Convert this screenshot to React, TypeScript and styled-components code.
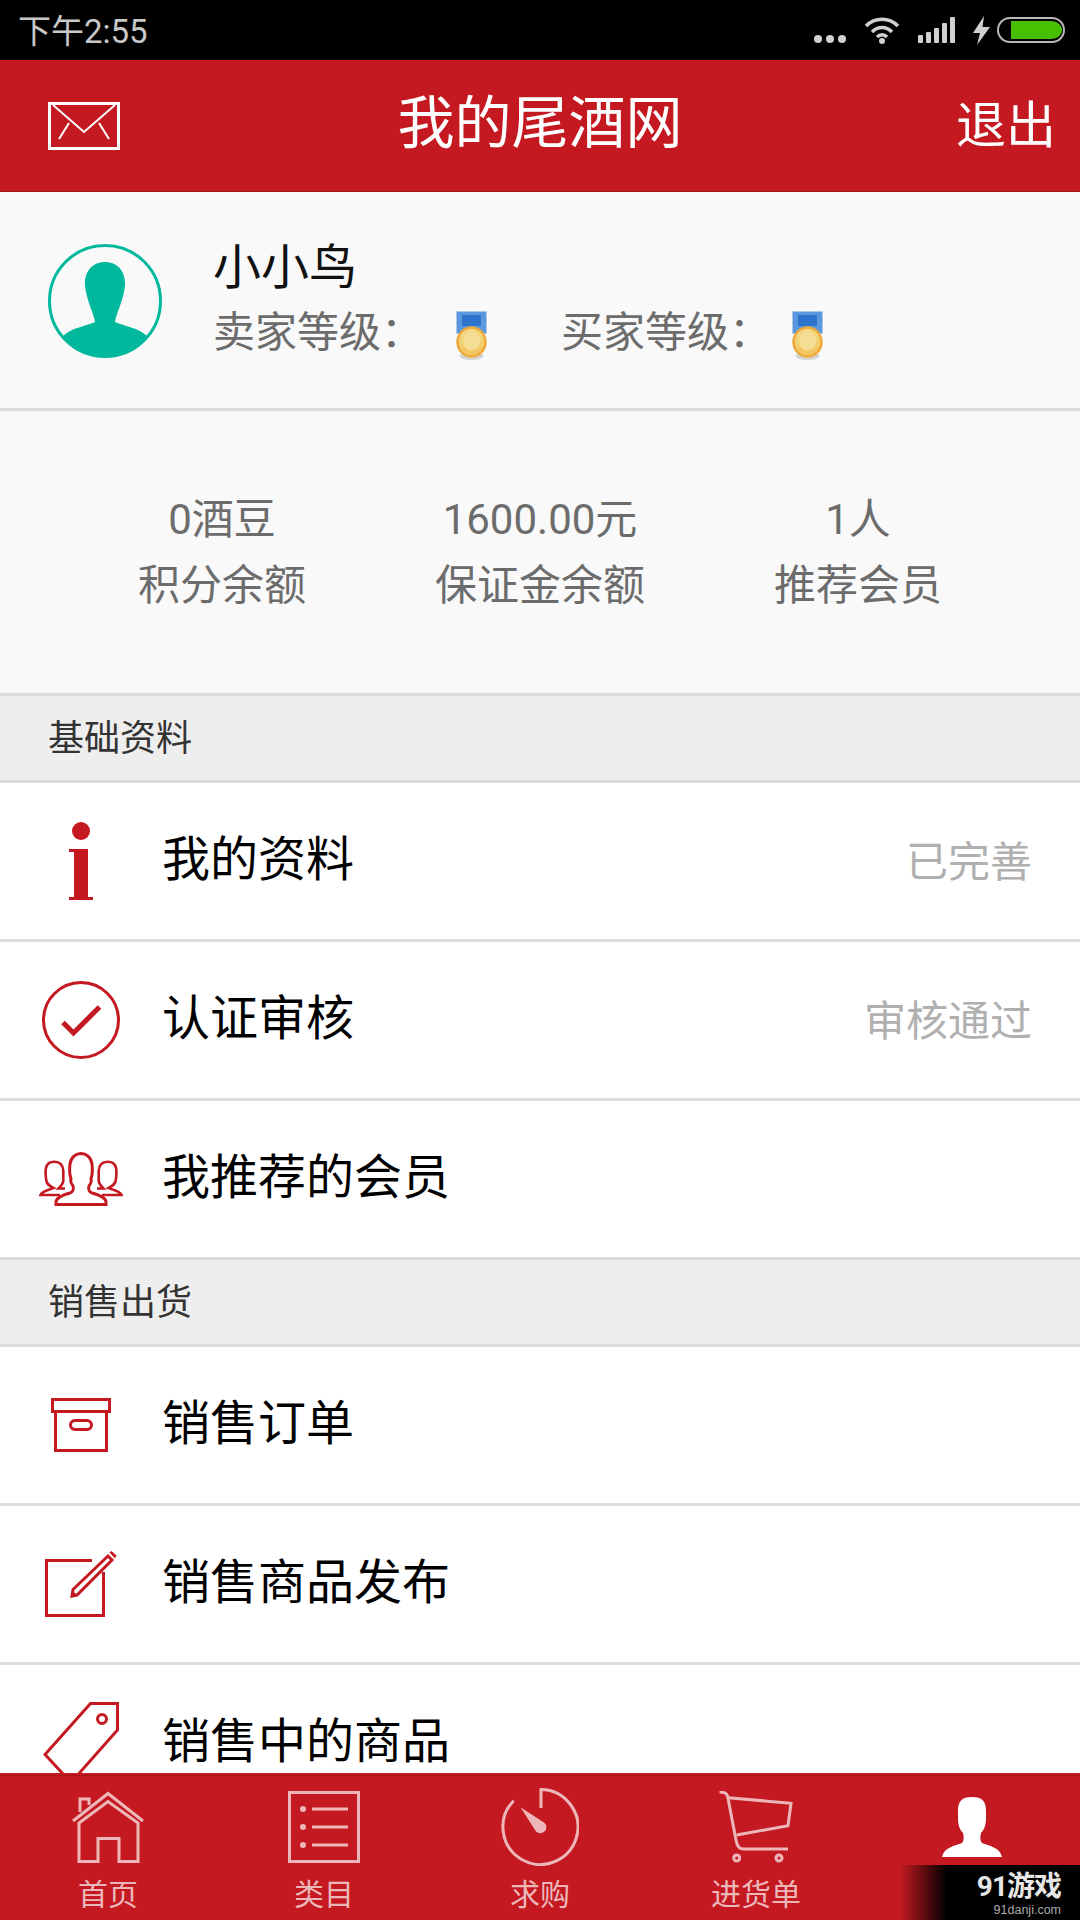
import styled, { createGlobalStyle } from 'styled-components';
import type { ReactNode } from 'react';

const RED = '#c41920';
const PINK = '#edb7ba';
const LINE = '#dcdcdc';

const GlobalStyle = createGlobalStyle`
  html, body {
    margin: 0;
    padding: 0;
    background: #fff;
  }
  body {
    font-family: Roboto, "Noto Sans CJK SC", sans-serif;
  }
`;

const Page = styled.div`
  position: relative;
  width: 1080px;
  height: 1920px;
  display: flex;
  flex-direction: column;
  overflow: hidden;
`;

const StatusBar = styled.div`
  height: 60px;
  flex: none;
  background: #000;
  display: flex;
  align-items: center;
  padding: 0 15px 0 18px;
  color: #c8c8c8;
`;

const Clock = styled.span`
  font-size: 33px;
  flex: 1;
  margin-top: -2px;
`;

const StatusIcons = styled.div`
  display: flex;
  align-items: center;
  gap: 18px;
`;

const Header = styled.header`
  height: 131px;
  flex: none;
  background: ${RED};
  border-bottom: 1px solid #a5141a;
  display: grid;
  grid-template-columns: 1fr auto 1fr;
  align-items: center;
  padding: 0 24px;
  color: #fff;
`;

const MailIcon = styled.svg`
  margin-left: 24px;
`;

const Title = styled.h1`
  margin: 0 0 4px;
  font-size: 57px;
  font-weight: 400;
  line-height: 1;
`;

const Logout = styled.span`
  justify-self: end;
  font-size: 50px;
  line-height: 1;
  margin-bottom: 0;
`;

const Scroller = styled.main`
  flex: 1;
  min-height: 0;
  overflow: hidden;
`;

const Profile = styled.section`
  height: 219px;
  box-sizing: border-box;
  padding: 48px 0 0 48px;
  display: flex;
  align-items: flex-start;
  gap: 51px;
  background: #f9f9f9;
  border-bottom: 3px solid ${LINE};
`;

const ProfileAvatar = styled.svg`
  flex: none;
  margin-top: 4px;
`;

const ProfileText = styled.div`
  display: flex;
  flex-direction: column;
`;

const Name = styled.div`
  font-size: 48px;
  line-height: 56px;
  color: #111;
`;

const Levels = styled.div`
  display: flex;
  align-items: flex-start;
  margin-top: 12px;
`;

const LevelLabel = styled.span<{ $width: number }>`
  font-size: 42px;
  line-height: 50px;
  color: #6c6c6c;
  width: ${(p) => p.$width}px;
`;

const Medal = styled.svg`
  flex: none;
  margin: 3px 74px 0 0;
`;

const Stats = styled.section`
  height: 285px;
  box-sizing: border-box;
  padding-top: 2px;
  display: grid;
  grid-template-columns: repeat(3, 318px);
  justify-content: center;
  align-content: center;
  background: #f9f9f9;
  border-bottom: 3px solid ${LINE};
`;

const Stat = styled.div`
  text-align: center;
  font-size: 42px;
  line-height: 66px;
  color: #6c6c6c;
`;

const SectionTitle = styled.div`
  height: 87px;
  box-sizing: border-box;
  padding: 0 0 7px 48px;
  display: flex;
  align-items: center;
  background: #eee;
  border-bottom: 3px solid ${LINE};
  font-size: 36px;
  color: #333;
`;

const Row = styled.div`
  height: 159px;
  box-sizing: border-box;
  display: flex;
  align-items: center;
  background: #fff;
  border-bottom: 3px solid ${LINE};
  padding-right: 48px;
`;

const RowIcon = styled.div`
  width: 162px;
  flex: none;
  display: flex;
  justify-content: center;
`;

const RowLabel = styled.span`
  flex: 1;
  font-size: 48px;
  line-height: 1;
  color: #000;
  margin-bottom: 2px;
`;

const RowValue = styled.span`
  font-size: 42px;
  line-height: 1;
  color: #b0b0b0;
  margin-top: 3px;
`;

const TabBar = styled.nav`
  height: 147px;
  flex: none;
  display: grid;
  grid-template-columns: repeat(5, 216px);
  background: linear-gradient(${RED} 2px, #a5141a 2px, #a5141a 3px, ${RED} 3px);
`;

const Tab = styled.div`
  display: flex;
  flex-direction: column;
  align-items: center;
  padding-top: 15px;
  color: ${PINK};
`;

const TabIcon = styled.div`
  height: 78px;
  display: flex;
  align-items: center;
  justify-content: center;
`;

const TabLabel = styled.span`
  font-size: 30px;
  line-height: 1;
  margin-top: 14px;
`;

const Watermark = styled.div`
  position: absolute;
  right: 0;
  bottom: 0;
  width: 180px;
  height: 55px;
  box-sizing: border-box;
  padding: 7px 19px 0 0;
  background: linear-gradient(90deg, rgba(0, 0, 0, 0), #000 26%);
  display: flex;
  flex-direction: column;
  align-items: flex-end;
  color: #e6e6e6;
`;

const WatermarkLogo = styled.span`
  font-size: 28px;
  font-weight: 700;
  line-height: 30px;
  letter-spacing: -1px;
`;

const WatermarkUrl = styled.span`
  font-family: "Liberation Sans", sans-serif;
  font-size: 12.5px;
  line-height: 16px;
  color: #aaa;
`;

const stroke = { fill: 'none', stroke: RED, strokeWidth: 3 };
const tabStroke = { fill: 'none', stroke: PINK, strokeWidth: 3 };

const rowIcons: Record<string, ReactNode> = {
  info: (
    <svg width="24" height="78" viewBox="0 0 24 78" fill={RED}>
      <circle cx="12" cy="9" r="9" />
      <path d="M0 27h19v48h5v3H0v-3h5V30H0z" />
    </svg>
  ),
  check: (
    <svg width="78" height="78" viewBox="0 0 78 78">
      <circle cx="39" cy="39" r="37.5" {...stroke} />
      <path d="M21 41.5L31.5 52 57.5 26" fill="none" stroke={RED} strokeWidth="5" />
    </svg>
  ),
  group: (
    <svg width="84" height="54" viewBox="0 0 84 54">
      <path
        {...stroke}
        d="M17 52.5H67V50C67 46 60 43 53 41C50 40 49 37 50 34C52 31 53 29 52 27C53 24 54 20 53 12C52 5 47 1.5 42 1.5C37 1.500 32 5 31 12C30 20 31 24 32 27C31 29 32 31 34 34C35 37 34 40 31 41C24 43 17 46 17 50Z"
      />
      <path
        {...stroke}
        strokeWidth="2.600"
        d="M21 43H1.500C3 39 9 38 14.500 36C11 34 7.700 33 7.200 28C6.500 22 6 19 7 16C8 11 11 9.700 15.300 9.700C20 9.700 24 12 24.300 19V29C24 32 21 35 19.500 36.500H26"
      />
      <path
        {...stroke}
        strokeWidth="2.600"
        d="M63 43H82.500C81 39 75 38 69.500 36C73 34 76.300 33 76.800 28C77.500 22 78 19 77 16C76 11 73 9.700 68.700 9.700C64 9.700 60 12 59.700 19V29C60 32 63 35 64.500 36.500H58"
      />
    </svg>
  ),
  box: (
    <svg width="60" height="54" viewBox="0 0 60 54">
      <path {...stroke} d="M1.500 1.500h57v12h-57zM4.500 13.500v39h51v-39" />
      <rect {...stroke} x="19.500" y="22.500" width="21" height="9" rx="4.500" />
    </svg>
  ),
  edit: (
    <svg width="72" height="66" viewBox="0 0 72 66">
      <path {...stroke} d="M47 9.500H1.500v55h57V21" />
      <path {...stroke} d="M28 38.500L63 5l4 4-35 35-5 1z" />
      <path fill={RED} d="M64.500 1.500l2-1.500 5 4.500-1.500 3zM27 39l5 5-5.500 1.500z" />
    </svg>
  ),
  tag: (
    <svg width="76" height="82" viewBox="0 0 76 82">
      <path {...stroke} d="M47.500 1.500H74.500V28L28 80.500L2 52.500z" />
      <circle {...stroke} cx="59" cy="17" r="4.500" />
    </svg>
  ),
};

const menuSections = [
  {
    title: '基础资料',
    rows: [
      { icon: 'info', label: '我的资料', value: '已完善' },
      { icon: 'check', label: '认证审核', value: '审核通过' },
      { icon: 'group', label: '我推荐的会员' },
    ],
  },
  {
    title: '销售出货',
    rows: [
      { icon: 'box', label: '销售订单' },
      { icon: 'edit', label: '销售商品发布' },
      { icon: 'tag', label: '销售中的商品' },
    ],
  },
];

const stats = [
  { value: '0酒豆', label: '积分余额' },
  { value: '1600.00元', label: '保证金余额' },
  { value: '1人', label: '推荐会员' },
];

const tabs: { label?: string; icon: ReactNode }[] = [
  {
    label: '首页',
    icon: (
      <svg width="72" height="72" viewBox="0 0 72 72">
        <path {...tabStroke} d="M7 31V70.500H26V47.500H47V70.500H66V31M1 30L36 2.500L71 30M7 32L36 10.500L66 32M8 21V8H17V14" />
      </svg>
    ),
  },
  {
    label: '类目',
    icon: (
      <svg width="72" height="72" viewBox="0 0 72 72">
        <rect {...tabStroke} x="1.500" y="1.500" width="69" height="69" />
        <path {...tabStroke} d="M24 18H60M24 36H60M24 54H60" />
        <g fill={PINK}>
          <circle cx="15" cy="18" r="3" />
          <circle cx="15" cy="36" r="3" />
          <circle cx="15" cy="54" r="3" />
        </g>
      </svg>
    ),
  },
  {
    label: '求购',
    icon: (
      <svg width="78" height="78" viewBox="0 0 78 78">
        <path {...tabStroke} d="M40 20V1.500A37.500 37.500 0 1 1 12.700 12.700" />
        <path fill={PINK} d="M19.500 19.300L43 34.500A6 6 0 1 1 34 42z" />
      </svg>
    ),
  },
  {
    label: '进货单',
    icon: (
      <svg width="74" height="72" viewBox="0 0 74 72">
        <path {...tabStroke} d="M0.500 1C5 1 8 2 8.700 5.600L17 49C18 55 20 58 24 58H69" />
        <path {...tabStroke} d="M9.600 6.700L72 12.300L69 34.700L17.700 44" />
        <circle {...tabStroke} cx="17.700" cy="67" r="3" />
        <circle {...tabStroke} cx="60" cy="67" r="3" />
      </svg>
    ),
  },
  {
    icon: (
      <svg width="60" height="60" viewBox="0 0 60 60" fill="#fff">
        <path d="M30 0C40 0 44 4 44 14V22C44 28 42 33 39 36C38 40 38 44 40 46C47 49 58 50 60 60H0C2 50 13 49 20 46C22 44 22 40 21 36C18 33 16 28 16 22V14C16 4 20 0 30 0Z" />
      </svg>
    ),
  },
];

const MedalIcon = () => (
  <Medal width="31" height="49" viewBox="0 0 31 49">
    <defs>
      <linearGradient id="gold" x1="0" y1="0" x2="0" y2="1">
        <stop offset="0" stopColor="#f6dc88" />
        <stop offset="1" stopColor="#f2c25a" />
      </linearGradient>
    </defs>
    <ellipse cx="15.500" cy="45" rx="12" ry="4" fill="#d4d4d4" />
    <rect x="0.500" y="0.500" width="30" height="22" fill="#5b97dc" stroke="#a9c8ea" />
    <rect x="6" y="4" width="19" height="11" fill="#2f74cc" />
    <ellipse cx="15.500" cy="31" rx="14" ry="14.500" fill="url(#gold)" stroke="#eea93a" strokeWidth="2.500" />
    <ellipse cx="15.500" cy="30" rx="8.500" ry="9.500" fill="#f4de95" />
  </Medal>
);

const Avatar = () => (
  <ProfileAvatar width="114" height="114" viewBox="0 0 114 114">
    <circle cx="57" cy="57" r="55.500" fill="none" stroke="#00b89c" strokeWidth="3" />
    <path
      fill="#00b89c"
      d="M100 93C92 84 76 82 67 78C68 70 75 58 77 42C78 28 70 18 57 18C44 18 36 28 37 42C39 58 46 70 47 78C38 82 22 84 14 93A56 56 0 0 0 100 93Z"
    />
  </ProfileAvatar>
);

const App = () => {
  return (
    <Page>
      <GlobalStyle />
      <StatusBar>
        <Clock>下午2:55</Clock>
        <StatusIcons>
          <svg width="32" height="8" viewBox="0 0 32 8" fill="#d0d0d0" style={{ marginTop: 18 }}>
            <circle cx="4" cy="4" r="4" />
            <circle cx="16" cy="4" r="4" />
            <circle cx="28" cy="4" r="4" />
          </svg>
          <svg width="36" height="28" viewBox="0 0 36 28" style={{ marginTop: -1 }}>
            <path d="M2 10C11 1 25 1 34 10M8 16C14 10 22 10 28 16M13 21C16 18 20 18 23 21" fill="none" stroke="#d0d0d0" strokeWidth="3.500" />
            <circle cx="18" cy="25" r="3" fill="#d0d0d0" />
          </svg>
          <svg width="37" height="26" viewBox="0 0 37 26" fill="#d0d0d0">
            <rect x="0" y="18" width="5" height="8" rx="1" />
            <rect x="8" y="15" width="5" height="11" rx="1" />
            <rect x="16" y="11" width="5" height="15" rx="1" />
            <rect x="24" y="6" width="5" height="20" rx="1" />
            <rect x="32" y="0" width="5" height="26" rx="1" />
          </svg>
          <svg width="17" height="29" viewBox="0 0 17 29" fill="#d0d0d0">
            <path d="M11 0L0 17H7L4 29L17 11H9.500z" />
          </svg>
          <svg width="68" height="26" viewBox="0 0 68 26" style={{ marginLeft: -11 }}>
            <rect x="1" y="1" width="66" height="24" rx="12" fill="none" stroke="#b8b8b8" strokeWidth="2" />
            <path d="M14 4H54C60 4 65 8 65 13C65 18 60 22 54 22H14z" fill="#46c000" />
          </svg>
        </StatusIcons>
      </StatusBar>

      <Header>
        <MailIcon width="72" height="48" viewBox="0 0 72 48">
          <rect x="1.500" y="1.500" width="69" height="45" fill="none" stroke="#fff" strokeWidth="3" />
          <path d="M5 3L36 30L67 3M21 21L11 37M51 21L61 37" fill="none" stroke="#fff" strokeWidth="2" />
        </MailIcon>
        <Title>我的尾酒网</Title>
        <Logout>退出</Logout>
      </Header>

      <Scroller>
        <Profile>
          <Avatar />
          <ProfileText>
            <Name>小小鸟</Name>
            <Levels>
              <LevelLabel $width={243}>卖家等级：</LevelLabel>
              <MedalIcon />
              <LevelLabel $width={231}>买家等级：</LevelLabel>
              <MedalIcon />
            </Levels>
          </ProfileText>
        </Profile>

        <Stats>
          {stats.map((stat) => (
            <Stat key={stat.label}>
              {stat.value}
              <br />
              {stat.label}
            </Stat>
          ))}
        </Stats>

        {menuSections.map((section) => (
          <div key={section.title}>
            <SectionTitle>{section.title}</SectionTitle>
            {section.rows.map((row) => (
              <Row key={row.label}>
                <RowIcon>{rowIcons[row.icon]}</RowIcon>
                <RowLabel>{row.label}</RowLabel>
                {row.value && <RowValue>{row.value}</RowValue>}
              </Row>
            ))}
          </div>
        ))}
      </Scroller>

      <TabBar>
        {tabs.map((tab, i) => (
          <Tab key={i}>
            <TabIcon>{tab.icon}</TabIcon>
            {tab.label && <TabLabel>{tab.label}</TabLabel>}
          </Tab>
        ))}
      </TabBar>

      <Watermark>
        <WatermarkLogo>91游戏</WatermarkLogo>
        <WatermarkUrl>91danji.com</WatermarkUrl>
      </Watermark>
    </Page>
  );
};

export default App;
